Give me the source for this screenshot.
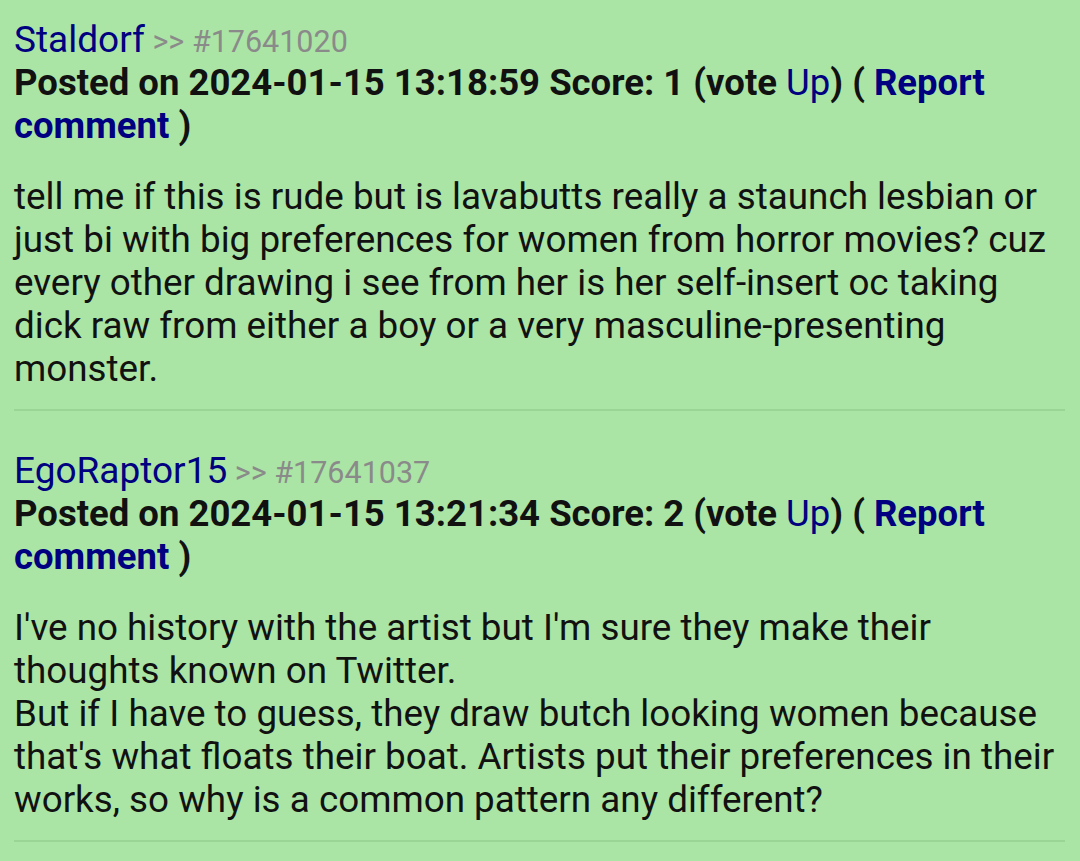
import React from "react";

type C = { user: string; id: string; date: string; score: number; body: string[] };

const comments: C[] = [
  {
    user: "Staldorf",
    id: "#17641020",
    date: "2024-01-15 13:18:59",
    score: 1,
    body: [
      "tell me if this is rude but is lavabutts really a staunch lesbian or just bi with big preferences for women from horror movies? cuz every other drawing i see from her is her self-insert oc taking dick raw from either a boy or a very masculine-presenting monster.",
    ],
  },
  {
    user: "EgoRaptor15",
    id: "#17641037",
    date: "2024-01-15 13:21:34",
    score: 2,
    body: [
      "I've no history with the artist but I'm sure they make their thoughts known on Twitter.",
      "But if I have to guess, they draw butch looking women because that's what floats their boat. Artists put their preferences in their works, so why is a common pattern any different?",
    ],
  },
];

function Comment({ c }: { c: C }) {
  return (
    <div>
      <div className="h-[43px] overflow-visible text-[37px] leading-[43px] whitespace-nowrap">
        <span className="text-[#000080]">{c.user}</span>
        <span className="text-[30.5px] text-[#8a8a8a]"> &gt;&gt; {c.id}</span>
      </div>
      <div className="text-[36.5px] font-bold leading-[43px] text-[#111]">
        Posted on {c.date} Score: {c.score} (vote{" "}
        <span className="font-normal text-[#000080]">Up</span>) ({" "}
        <span className="text-[#000080]">Report comment</span> )
      </div>
      <div className="mt-[28px] text-[36.8px] leading-[43px] text-[#111]">
        {c.body.map((b, i) => (
          <div key={i}>{b}</div>
        ))}
      </div>
      <div className="mt-[19px] h-[2px] bg-[#9ad595]" />
      <div className="h-[38px]" />
    </div>
  );
}

export default function App() {
  return (
    <div
      className="min-h-[861px] w-[1080px] bg-[#aae5a5] pl-[14px] pr-[15px] pt-[18px]"
      style={{ fontFamily: "Roboto, sans-serif" }}
    >
      {comments.map((c) => (
        <Comment key={c.id} c={c} />
      ))}
    </div>
  );
}
